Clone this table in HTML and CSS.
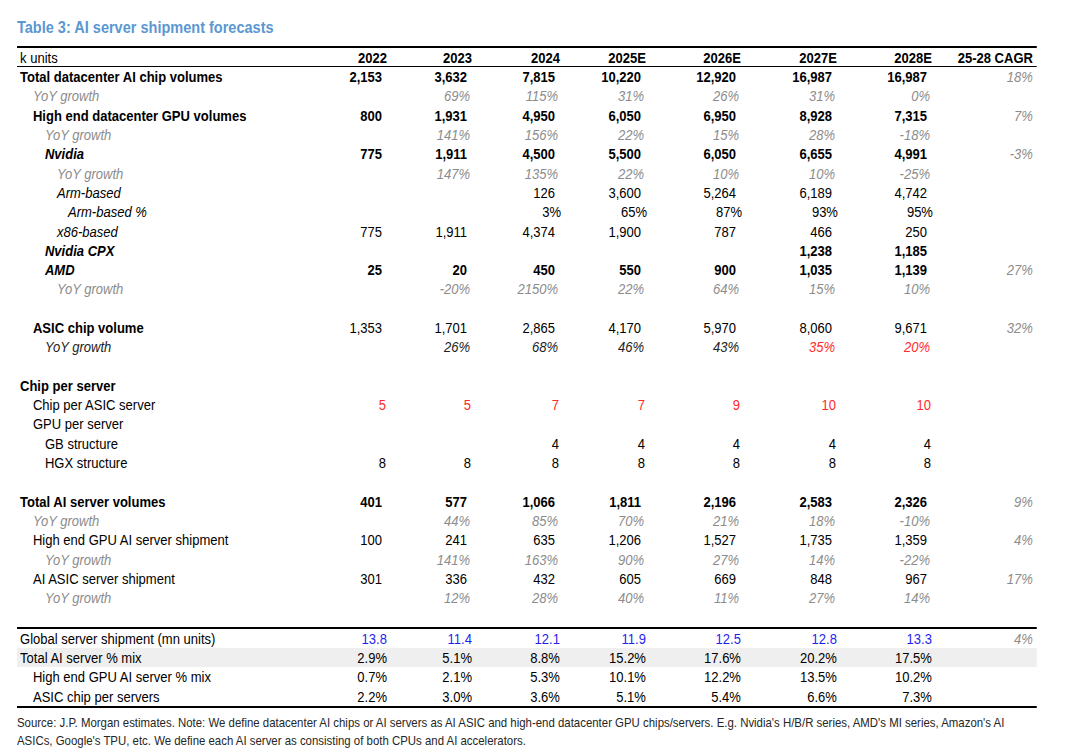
FILE: index.html
```html
<!DOCTYPE html>
<html lang="en">
<head>
<meta charset="utf-8">
<title>Table 3: AI server shipment forecasts</title>
<link rel="stylesheet" href="styles.css">
</head>
<body>
<div class="page">
  <div class="narrow">
  <h1 class="title">Table 3: AI server shipment forecasts</h1>
  <div class="tbl">
    <div class="row hdr"><span class="lbl i0">k units</span><span>2022</span><span>2023</span><span>2024</span><span>2025E</span><span>2026E</span><span>2027E</span><span>2028E</span><span>25-28 CAGR</span></div>

    <div class="row b"><span class="lbl i0">Total datacenter AI chip volumes</span><span>2,153</span><span>3,632</span><span>7,815</span><span>10,220</span><span>12,920</span><span>16,987</span><span>16,987</span><span>18%</span></div>
    <div class="row yoy"><span class="lbl i1">YoY growth</span><span></span><span>69%</span><span>115%</span><span>31%</span><span>26%</span><span>31%</span><span>0%</span><span></span></div>
    <div class="row b"><span class="lbl i1">High end datacenter GPU volumes</span><span>800</span><span>1,931</span><span>4,950</span><span>6,050</span><span>6,950</span><span>8,928</span><span>7,315</span><span>7%</span></div>
    <div class="row yoy"><span class="lbl i2">YoY growth</span><span></span><span>141%</span><span>156%</span><span>22%</span><span>15%</span><span>28%</span><span>-18%</span><span></span></div>
    <div class="row b"><span class="lbl i2 it">Nvidia</span><span>775</span><span>1,911</span><span>4,500</span><span>5,500</span><span>6,050</span><span>6,655</span><span>4,991</span><span>-3%</span></div>
    <div class="row yoy"><span class="lbl i3">YoY growth</span><span></span><span>147%</span><span>135%</span><span>22%</span><span>10%</span><span>10%</span><span>-25%</span><span></span></div>
    <div class="row"><span class="lbl i3 it">Arm-based</span><span></span><span></span><span>126</span><span>3,600</span><span>5,264</span><span>6,189</span><span>4,742</span><span></span></div>
    <div class="row pct"><span class="lbl i4 it">Arm-based %</span><span></span><span></span><span>3%</span><span>65%</span><span>87%</span><span>93%</span><span>95%</span><span></span></div>
    <div class="row"><span class="lbl i3 it">x86-based</span><span>775</span><span>1,911</span><span>4,374</span><span>1,900</span><span>787</span><span>466</span><span>250</span><span></span></div>
    <div class="row b"><span class="lbl i2 it">Nvidia CPX</span><span></span><span></span><span></span><span></span><span></span><span>1,238</span><span>1,185</span><span></span></div>
    <div class="row b"><span class="lbl i2 it">AMD</span><span>25</span><span>20</span><span>450</span><span>550</span><span>900</span><span>1,035</span><span>1,139</span><span>27%</span></div>
    <div class="row yoy"><span class="lbl i3">YoY growth</span><span></span><span>-20%</span><span>2150%</span><span>22%</span><span>64%</span><span>15%</span><span>10%</span><span></span></div>
    <div class="row gap"></div>
    <div class="row"><span class="lbl i1 bl">ASIC chip volume</span><span>1,353</span><span>1,701</span><span>2,865</span><span>4,170</span><span>5,970</span><span>8,060</span><span>9,671</span><span>32%</span></div>
    <div class="row yoy dark"><span class="lbl i2">YoY growth</span><span></span><span>26%</span><span>68%</span><span>46%</span><span>43%</span><span class="red">35%</span><span class="red">20%</span><span></span></div>
    <div class="row gap"></div>
    <div class="row"><span class="lbl i0 bl">Chip per server</span></div>
    <div class="row small red-vals"><span class="lbl i1">Chip per ASIC server</span><span>5</span><span>5</span><span>7</span><span>7</span><span>9</span><span>10</span><span>10</span><span></span></div>
    <div class="row"><span class="lbl i1">GPU per server</span></div>
    <div class="row small"><span class="lbl i2">GB structure</span><span></span><span></span><span>4</span><span>4</span><span>4</span><span>4</span><span>4</span><span></span></div>
    <div class="row small"><span class="lbl i2">HGX structure</span><span>8</span><span>8</span><span>8</span><span>8</span><span>8</span><span>8</span><span>8</span><span></span></div>
    <div class="row gap"></div>
    <div class="row b"><span class="lbl i0">Total AI server volumes</span><span>401</span><span>577</span><span>1,066</span><span>1,811</span><span>2,196</span><span>2,583</span><span>2,326</span><span>9%</span></div>
    <div class="row yoy"><span class="lbl i1">YoY growth</span><span></span><span>44%</span><span>85%</span><span>70%</span><span>21%</span><span>18%</span><span>-10%</span><span></span></div>
    <div class="row"><span class="lbl i1">High end GPU AI server shipment</span><span>100</span><span>241</span><span>635</span><span>1,206</span><span>1,527</span><span>1,735</span><span>1,359</span><span>4%</span></div>
    <div class="row yoy"><span class="lbl i2">YoY growth</span><span></span><span>141%</span><span>163%</span><span>90%</span><span>27%</span><span>14%</span><span>-22%</span><span></span></div>
    <div class="row"><span class="lbl i1">AI ASIC server shipment</span><span>301</span><span>336</span><span>432</span><span>605</span><span>669</span><span>848</span><span>967</span><span>17%</span></div>
    <div class="row yoy"><span class="lbl i2">YoY growth</span><span></span><span>12%</span><span>28%</span><span>40%</span><span>11%</span><span>27%</span><span>14%</span><span></span></div>
    <div class="row gap"></div>

    <div class="mixsec">
      <div class="row mix blue-vals"><span class="lbl i0">Global server shipment (mn units)</span><span>13.8</span><span>11.4</span><span>12.1</span><span>11.9</span><span>12.5</span><span>12.8</span><span>13.3</span><span>4%</span></div>
      <div class="row mix shade"><span class="lbl i0">Total AI server % mix</span><span>2.9%</span><span>5.1%</span><span>8.8%</span><span>15.2%</span><span>17.6%</span><span>20.2%</span><span>17.5%</span><span></span></div>
      <div class="row mix"><span class="lbl i1">High end GPU AI server % mix</span><span>0.7%</span><span>2.1%</span><span>5.3%</span><span>10.1%</span><span>12.2%</span><span>13.5%</span><span>10.2%</span><span></span></div>
      <div class="row mix"><span class="lbl i1">ASIC chip per servers</span><span>2.2%</span><span>3.0%</span><span>3.6%</span><span>5.1%</span><span>5.4%</span><span>6.6%</span><span>7.3%</span><span></span></div>
    </div>
  </div>
  <p class="note">Source: J.P. Morgan estimates. Note: We define datacenter AI chips or AI servers as AI ASIC and high-end datacenter GPU chips/servers. E.g. Nvidia's H/B/R series, AMD's MI series, Amazon's AI<br>ASICs, Google's TPU, etc. We define each AI server as consisting of both CPUs and AI accelerators.</p>
  </div>
</div>
</body>
</html>
```

FILE: styles.css
```css
* { box-sizing: border-box; }

html, body {
  overflow: hidden;
}

body {
  margin: 0;
  background: #ffffff;
  color: #000000;
  font-family: "Liberation Sans", Arial, sans-serif;
}

.page {
  padding: 17px 0 0 17px;
}

/* Arial Narrow look: Liberation Sans condensed horizontally */
.narrow {
  width: 1214.3px;
  transform: scaleX(0.84);
  transform-origin: 0 0;
}

.title {
  margin: 0 0 9px 0;
  font-size: 17.3px;
  line-height: 20px;
  font-weight: bold;
  color: #5b97d1;
}

.tbl {
  width: 1214.3px;
  border-top: 2px solid #000;
  border-bottom: 2.5px solid #000;
}

.row {
  display: grid;
  grid-template-columns: 344.05px 101.19px 101.19px 104.76px 102.38px 113.1px 114.29px 113.1px 120.24px;
  height: 19.3px;
  align-items: center;
  font-size: 15.5px;
  line-height: 19px;
  white-space: nowrap;
}

.row > span {
  text-align: right;
  padding-right: 10.7px;
}

.row > span.lbl {
  text-align: left;
  padding-right: 0;
}

.row > span:nth-child(9) {
  padding-right: 4.8px;
  color: #8c8c8c;
  font-style: italic;
  font-weight: normal;
}

.i0 { padding-left: 3.6px; }
.i1 { padding-left: 19px; }
.i2 { padding-left: 33.3px; }
.i3 { padding-left: 47.6px; }
.i4 { padding-left: 60.7px; }

.it { font-style: italic; }
.bl { font-weight: bold; }

.hdr {
  height: 19px;
  border-bottom: 1px solid #000;
  font-weight: bold;
}

.hdr > span { padding-right: 4.8px; }
.hdr > span.lbl { font-weight: normal; }
.row.hdr > span:nth-child(9) {
  color: #000;
  font-style: normal;
  font-weight: bold;
}

.b { font-weight: bold; }

.yoy {
  color: #8c8c8c;
  font-style: italic;
}
.yoy > span { padding-right: 7.1px; }

.yoy.dark { color: #222; }
.yoy .red, .red-vals > span:not(.lbl) { color: #ff2a2a; }

.pct > span { padding-right: 3.6px; }
.small > span { padding-right: 6px; }

.mixsec {
  border-top: 2px solid #000;
}

.mix > span { padding-right: 4.8px; }
.blue-vals > span:not(.lbl) { color: #1f1fef; }
.row.blue-vals > span:nth-child(9) { color: #8c8c8c; }

.shade { background: #efefef; }

.note {
  margin: 6px 0 0 0;
  font-size: 13.6px;
  line-height: 18px;
  color: #262626;
  white-space: nowrap;
}
```
